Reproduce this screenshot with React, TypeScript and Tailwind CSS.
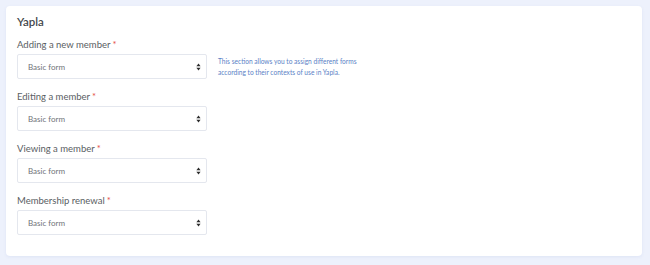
import React from "react";

const fields = [
  "Adding a new member",
  "Editing a member",
  "Viewing a member",
  "Membership renewal",
];

const SortArrows = () => (
  <svg width="5" height="8" viewBox="0 0 5 8" className="shrink-0">
    <path d="M2.5 0.5 L4.6 3.3 H0.4 Z" fill="#2b2b2b" />
    <path d="M2.5 7.5 L4.6 4.7 H0.4 Z" fill="#2b2b2b" />
  </svg>
);

const SelectField = ({ label }: { label: string }) => (
  <div className="flex flex-col">
    <label className="h-[16px] leading-[16px] text-[9.5px] text-[#5a5e63]">
      {label}
      <span className="ml-[2px] text-[#e5534b]">*</span>
    </label>
    <div className="mt-[1px] w-[190px] h-[25px] flex items-center justify-between pl-[10px] pr-[5px] border border-[#e4e7ee] rounded-[2px] bg-white">
      <span className="text-[8px] text-[#6f7378]">Basic form</span>
      <SortArrows />
    </div>
  </div>
);

export default function App() {
  return (
    <div
      className="w-[650px] h-[265px] bg-[#edf1fc] pt-[6px] pl-[6px]"
      style={{ fontFamily: "Lato, 'Noto Sans', sans-serif" }}
    >
      <div className="w-[636px] h-[250px] bg-white rounded-[4px] shadow-[0_1px_3px_rgba(120,140,200,0.12)] pt-[8px] px-[11px]">
        <h2 className="h-[16px] leading-[16px] text-[11.5px] font-semibold text-[#44484c]">
          Yapla
        </h2>
        <div className="flex gap-[11px] mt-[7px]">
          <div className="flex flex-col gap-[10px]">
            {fields.map((f) => (
              <SelectField key={f} label={f} />
            ))}
          </div>
          <p className="mt-[19px] text-[6.6px] leading-[11px] text-[#5a82c6]">
            This section allows you to assign different forms
            <br />
            according to their contexts of use in Yapla.
          </p>
        </div>
      </div>
    </div>
  );
}
